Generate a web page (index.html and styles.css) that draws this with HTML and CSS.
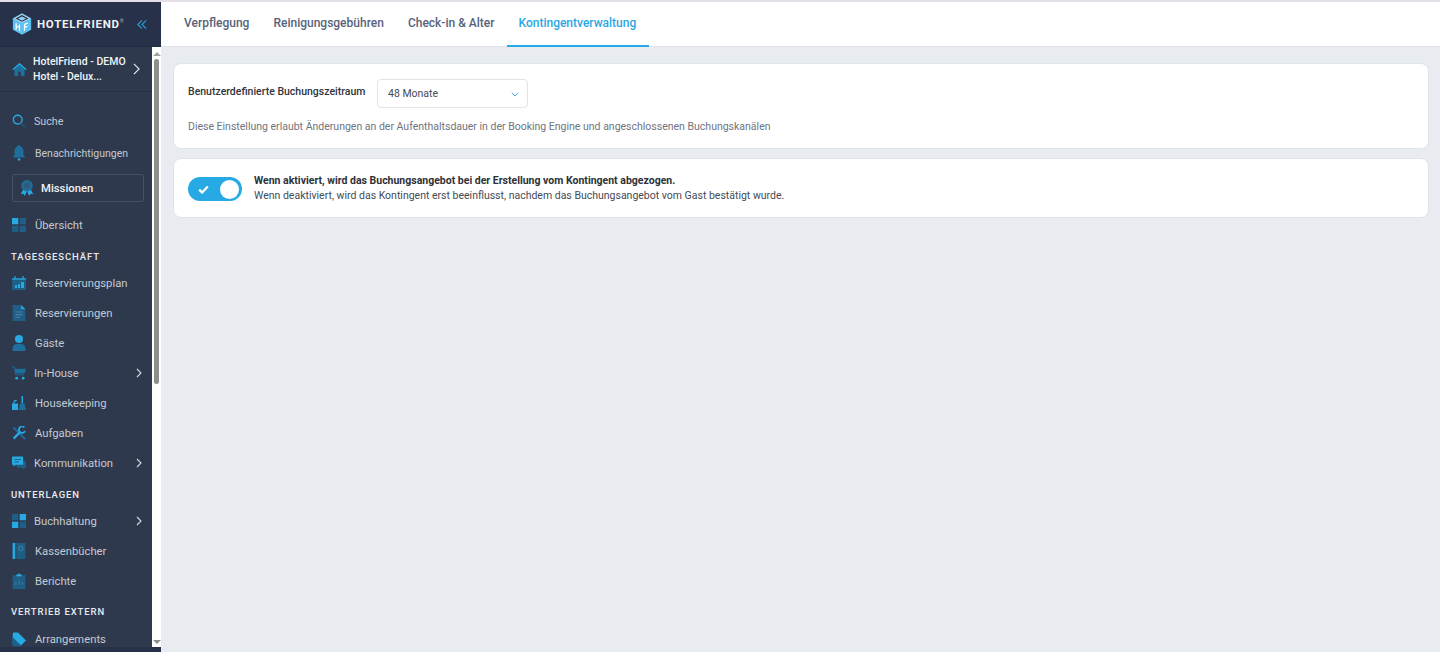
FILE: index.html
```html
<!DOCTYPE html>
<html lang="de">
<head>
<meta charset="utf-8">
<title>HotelFriend</title>
<link rel="stylesheet" href="styles.css">
</head>
<body>
<div class="topline"></div>
<div class="app">
  <aside class="sidebar">
    <header class="brand">
      <svg class="logo" viewBox="0 0 24 26"><path d="M12 0l11 6v14l-11 6-11-6V6z" fill="#5cc0f0"/><path d="M12 1.500l9 5-9 4.500-9-4.500z" fill="#26324a" stroke="#d7eefb" stroke-width="1"/><path d="M12 4l5 2.500-5 2.500-5-2.500z" fill="#8fd3f5"/><path d="M5 12v8M9 13.500v8M5 16.500h4M15 13.500v8M15 13.500l4-1.500M15 17l3.500-1.200" stroke="#fff" stroke-width="1.500" fill="none"/></svg>
      <span class="brand-name">HOTELFRIEND<sup>®</sup></span>
      <svg class="collapse" viewBox="0 0 12 12"><path d="M6 1L1 6l5 5M11 1L6 6l5 5" fill="none" stroke="#2a9fd8" stroke-width="1.300"/></svg>
    </header>
    <div class="sidebar-body">
      <nav class="nav">
        <div class="property">
          <svg class="icon home" viewBox="0 0 16 14"><path d="M8 0L0 7h2.500v7h4V9.500h3V14h4V7H16z" fill="#1f6f9c"/><path d="M8 0L0 7h2L8 2l6 5h2z" fill="#27a9e3"/></svg>
          <span class="property-name">HotelFriend - DEMO<br>Hotel - Delux...</span>
          <svg class="chev-big" viewBox="0 0 8 14"><path d="M1 1l6 6-6 6" fill="none" stroke="#e8edf2" stroke-width="1.300"/></svg>
        </div>
        <a class="item search"><svg class="icon" viewBox="0 0 16 16"><circle cx="6.500" cy="6.500" r="5" fill="none" stroke="#27a9e3" stroke-width="1.600"/><path d="M10.500 10.500L15 15" stroke="#1f5f86" stroke-width="1.300"/></svg><span>Suche</span></a>
        <a class="item notif"><svg class="icon tall" viewBox="0 0 14 18"><path d="M7 0c1 0 1.300.7 1.300 1.500C11 2.300 12 4.500 12 7v4l2 3H0l2-3V7c0-2.500 1-4.700 3.700-5.500C5.700.7 6 0 7 0z" fill="#1f6f9c"/><ellipse cx="7" cy="16.300" rx="1.600" ry="1.300" fill="#27a9e3"/></svg><span>Benachrichtigungen</span></a>
        <a class="mission"><svg class="icon tall" viewBox="0 0 14 18"><path d="M3 10l-3 6 3-.6L4.500 18 7 12.500 9.500 18l1.500-2.600 3 .6-3-6z" fill="#27a9e3"/><circle cx="7" cy="6.500" r="6.500" fill="#1f6f9c"/><circle cx="7" cy="6.500" r="4" fill="#2f5c7e"/></svg><span>Missionen</span></a>
        <a class="item overview"><svg class="icon" viewBox="0 0 14 14"><rect width="6.300" height="6.300" fill="#27a9e3"/><rect x="7.700" width="6.300" height="6.300" fill="#1f5f86"/><rect y="7.700" width="6.300" height="6.300" fill="#1f5f86"/><rect x="7.700" y="7.700" width="6.300" height="6.300" fill="#1f5f86"/></svg><span>Übersicht</span></a>
        <h2 class="section">TAGESGESCHÄFT</h2>
        <a class="item"><svg class="icon" viewBox="0 0 14 14"><path d="M0 2h14v12H0z" fill="#1f5f86"/><path d="M3 0v3M11 0v3" stroke="#27a9e3" stroke-width="1.200"/><path d="M0 2h14v2H0z" fill="#27a9e3" opacity=".6"/><path d="M3 9h2v3H3zM6 8h2v4H6zM9 6h3v6H9z" fill="#27a9e3"/></svg><span>Reservierungsplan</span></a>
        <a class="item"><svg class="icon tall" viewBox="0 0 12 15"><path d="M0 0h8l4 4v11H0z" fill="#1f5f86"/><path d="M8 0l4 4H8z" fill="#27a9e3"/><path d="M2.500 6.500h7M2.500 9h7M2.500 11.500h4.500" stroke="#4a7d9f" stroke-width="1"/></svg><span>Reservierungen</span></a>
        <a class="item"><svg class="icon tall" viewBox="0 0 12 15"><circle cx="6" cy="3.800" r="3.800" fill="#27a9e3"/><path d="M0 15v-2.500C0 10 2 8.500 4 8.500h4c2 0 4 1.500 4 4V15z" fill="#1f6f9c"/></svg><span>Gäste</span></a>
        <a class="item narrow"><svg class="icon" viewBox="0 0 15 14"><path d="M0 .5h2.500L4 9h9" fill="none" stroke="#1f6f9c" stroke-width="1"/><path d="M3.200 2.500H15l-1.500 5H4z" fill="#1f6f9c"/><circle cx="5" cy="12.500" r="1.500" fill="#27a9e3"/><circle cx="12" cy="12.500" r="1.500" fill="#27a9e3"/></svg><span>In-House</span><svg class="chev" viewBox="0 0 6 10"><path d="M1 1l4 4-4 4" fill="none" stroke="#d5dbe2" stroke-width="1.100"/></svg></a>
        <a class="item"><svg class="icon tall" viewBox="0 0 15 15"><path d="M11 0v8" stroke="#27a9e3" stroke-width="1.600"/><path d="M8.500 8h5L15 15H7.500z" fill="#1f6f9c"/><path d="M0 8h6.500v7H0z" fill="#27a9e3"/><path d="M1.500 8l1.500-3h2" stroke="#27a9e3" stroke-width="1.200" fill="none"/></svg><span>Housekeeping</span></a>
        <a class="item"><svg class="icon" viewBox="0 0 15 15"><path d="M1.500 1.500L14 14" stroke="#1f6f9c" stroke-width="2"/><path d="M1.800 13.500L8.300 6.700" stroke="#27a9e3" stroke-width="2.600"/><path d="M13.200 1.300A3.500 3.500 0 1 0 14 5.500" fill="none" stroke="#27a9e3" stroke-width="2"/></svg><span>Aufgaben</span></a>
        <a class="item narrow"><svg class="icon" viewBox="0 0 15 14"><path d="M5 5h10v7h-2v2l-3-2H5z" fill="#1f5f86"/><path d="M1 0h10a1 1 0 011 1v7a1 1 0 01-1 1H4l-2.500 2V9H1a1 1 0 01-1-1V1a1 1 0 011-1z" fill="#27a9e3"/><path d="M2.500 3.200h7M2.500 5.800h5" stroke="#1f5f86" stroke-width="1"/></svg><span>Kommunikation</span><svg class="chev" viewBox="0 0 6 10"><path d="M1 1l4 4-4 4" fill="none" stroke="#d5dbe2" stroke-width="1.100"/></svg></a>
        <h2 class="section sec-b">UNTERLAGEN</h2>
        <a class="item narrow"><svg class="icon" viewBox="0 0 14 14"><rect width="6.300" height="6.300" fill="#1f5f86"/><rect x="7.700" width="6.300" height="6.300" fill="#27a9e3"/><rect y="7.700" width="6.300" height="6.300" fill="#27a9e3"/><rect x="7.700" y="7.700" width="6.300" height="6.300" fill="#1f5f86"/></svg><span>Buchhaltung</span><svg class="chev" viewBox="0 0 6 10"><path d="M1 1l4 4-4 4" fill="none" stroke="#d5dbe2" stroke-width="1.100"/></svg></a>
        <a class="item"><svg class="icon tall" viewBox="0 0 12 15"><path d="M0 0h2.500v15H0z" fill="#27a9e3"/><path d="M3.500 0H12v15H3.500z" fill="#1f5f86"/><circle cx="7.700" cy="5" r="2" fill="none" stroke="#3d7aa0"/></svg><span>Kassenbücher</span></a>
        <a class="item"><svg class="icon tall" viewBox="0 0 12 15"><path d="M0 2h12v13H0z" fill="#1f5f86"/><path d="M3.500 3V1.500h1.500a1 1 0 012 0h1.500V3z" fill="#27a9e3"/><path d="M3 11V9M6 11V7M9 11V8.500" stroke="#3d7aa0"/></svg><span>Berichte</span></a>
        <h2 class="section sec-c">VERTRIEB EXTERN</h2>
        <a class="item"><svg class="icon tall" viewBox="0 0 14 15"><path d="M0 3l2-1 9 9-3 4H2l-2-2z" fill="#1f5f86"/><path d="M1 1h5l8 8-5 5-8-8z" fill="#27a9e3"/></svg><span>Arrangements</span></a>
      </nav>
      <div class="scrollbar" aria-hidden="true"><i class="arrow-up"></i><i class="thumb"></i><i class="arrow-down"></i></div>
    </div>
    <div class="sidebar-foot"></div>
  </aside>
  <main class="main">
    <div class="tabs">
      <a class="tab">Verpflegung</a>
      <a class="tab">Reinigungsgebühren</a>
      <a class="tab">Check-in &amp; Alter</a>
      <a class="tab active">Kontingentverwaltung</a>
    </div>
    <div class="content">
      <section class="card card-period">
        <div class="field">
          <label class="field-label">Benutzerdefinierte Buchungszeitraum</label>
          <div class="select"><span>48 Monate</span><svg viewBox="0 0 8 5"><path d="M.7.700L4 4 7.300.700" fill="none" stroke="#27a9e3" stroke-width=".9"/></svg></div>
        </div>
        <p class="hint">Diese Einstellung erlaubt Änderungen an der Aufenthaltsdauer in der Booking Engine und angeschlossenen Buchungskanälen</p>
      </section>
      <section class="card card-toggle">
        <div class="toggle"><svg viewBox="0 0 12 10"><path d="M1.200 5.200L4.500 8.300 10.800 1.700" fill="none" stroke="#fff" stroke-width="2.600"/></svg><i class="knob"></i></div>
        <div class="toggle-text">
          <strong>Wenn aktiviert, wird das Buchungsangebot bei der Erstellung vom Kontingent abgezogen.</strong>
          <span>Wenn deaktiviert, wird das Kontingent erst beeinflusst, nachdem das Buchungsangebot vom Gast bestätigt wurde.</span>
        </div>
      </section>
    </div>
  </main>
</div>
</body>
</html>
```
FILE: styles.css
```css
* { box-sizing: border-box; }
html, body { margin: 0; height: 100%; overflow: hidden; }
body { font-family: Roboto, "Liberation Sans", sans-serif; background: #e8ebf0; display: flex; flex-direction: column; }
.topline { height: 2px; background: #e4dfe6; flex: none; }
.app { flex: 1; display: flex; min-height: 0; }

.sidebar { width: 161px; flex: none; display: flex; flex-direction: column; background: #2e394d; }
.brand { height: 45px; flex: none; background: #27324a; border-bottom: 1px solid #222c40; display: flex; align-items: center; padding-left: 12px; }
.logo { width: 20px; height: 24px; flex: none; }
.brand-name { margin-left: 5px; color: #eef1f4; font-size: 11.500px; font-weight: 700; letter-spacing: .75px; white-space: nowrap; }
.brand-name sup { font-size: 5px; font-weight: 400; vertical-align: 5px; line-height: 0; color: #aab3be; }
.collapse { width: 10px; height: 11px; margin-left: 12px; flex: none; }

.sidebar-body { flex: 1; min-height: 0; display: flex; }
.nav { width: 152px; flex: none; overflow: hidden; }
.property { height: 45px; border-bottom: 1px solid #273145; display: flex; align-items: center; padding-left: 12px; }
.icon { width: 14px; height: 14px; flex: none; }
.icon.tall { height: 16px; }
.home { width: 15px; height: 13px; margin-top: 1px; }
.property-name { margin-left: 6px; color: #f0f3f6; font-size: 10.500px; font-weight: 500; line-height: 15px; width: 94px; white-space: nowrap; }
.chev-big { width: 7px; height: 12px; margin-left: 6px; }

.item { height: 30px; display: flex; align-items: center; padding-left: 12px; color: #c4cad2; font-size: 11.250px; white-space: nowrap; }
.item > span { margin-left: 9px; }
.item.narrow > span { margin-left: 8px; }
.search { margin-top: 14px; height: 30px; }
.search > span { font-size: 10.700px; margin-left: 8px; }
.notif { margin-top: 2px; }
.notif > span { font-size: 10.500px; }
.mission { display: flex; align-items: center; height: 28px; margin: 6px 8px 0 12px; padding-left: 7px; border: 1px solid #445066; border-radius: 2px; color: #eef1f4; font-size: 11.300px; font-weight: 500; }
.mission > span { margin-left: 7px; }
.overview { margin-top: 8px; }
.chev { width: 6px; height: 10px; margin-left: auto; margin-right: 10px; }
.section { margin: 10px 0 0; height: 14px; padding-left: 11px; font-size: 9.500px; line-height: 14px; font-weight: 500; letter-spacing: .9px; color: #e7eaee; }
.section + .item { margin-top: 4px; }
.sec-b { margin-top: 10px; }
.sec-c { margin-top: 9px; }
.sec-c + .item { margin-top: 5px; }

.scrollbar { width: 9px; flex: none; background: #fff; display: flex; flex-direction: column; align-items: center; }
.arrow-up { margin-top: 5px; border: 4px solid transparent; border-top: 0; border-bottom: 4px solid #a3a3a3; }
.thumb { width: 5px; height: 325px; margin-top: 3px; background: #8d8d8d; border-radius: 3px; }
.arrow-down { margin-top: auto; margin-bottom: 3px; border: 4px solid transparent; border-bottom: 0; border-top: 4px solid #8d8d8d; }
.sidebar-foot { height: 5px; flex: none; background: #27324a; }

.main { flex: 1; min-width: 0; display: flex; flex-direction: column; }
.tabs { height: 45px; flex: none; background: #fff; border-bottom: 1px solid #dfe3e9; display: flex; padding-left: 11px; }
.tab { padding: 0 12px; line-height: 42px; height: 45px; font-size: 12px; font-weight: 500; color: #58637a; white-space: nowrap; }
.tab.active { color: #2aa7e2; border-bottom: 2px solid #27a9e3; margin-left: 1px; padding-left: 11px; padding-right: 13px; }
.content { padding: 16px 11px 0 12px; display: flex; flex-direction: column; gap: 9px; }
.card { background: #fff; border: 1px solid #dfe3ea; border-radius: 8px; }
.card-period { height: 86px; padding: 15px 14px 0; }
.field { display: flex; align-items: flex-start; }
.field-label { width: 189px; flex: none; margin-top: 6px; font-size: 10.500px; font-weight: 500; line-height: 13px; color: #30343d; white-space: nowrap; }
.select { width: 151px; height: 29px; display: flex; align-items: center; justify-content: space-between; padding: 0 8px 1px 10px; border: 1px solid #dfe3ea; border-radius: 4px; font-size: 10.500px; color: #454a55; }
.select svg { width: 8px; height: 5px; margin-top: 2px; }
.hint { margin: 12px 0 0; font-size: 10.500px; line-height: 14px; color: #6f7480; white-space: nowrap; }
.card-toggle { height: 60px; display: flex; align-items: center; padding: 0 14px; }
.toggle { width: 54px; height: 24px; flex: none; border-radius: 12px; background: #27a9e3; display: flex; align-items: center; justify-content: space-between; padding: 0 3px 0 10px; margin-top: 2px; }
.toggle svg { width: 11px; height: 9px; }
.knob { width: 19px; height: 19px; border-radius: 50%; background: #fff; }
.toggle-text { margin-left: 12px; display: flex; flex-direction: column; font-size: 10.500px; line-height: 15px; color: #454a55; white-space: nowrap; }
.toggle-text strong { font-weight: 700; color: #2e3138; }
```
